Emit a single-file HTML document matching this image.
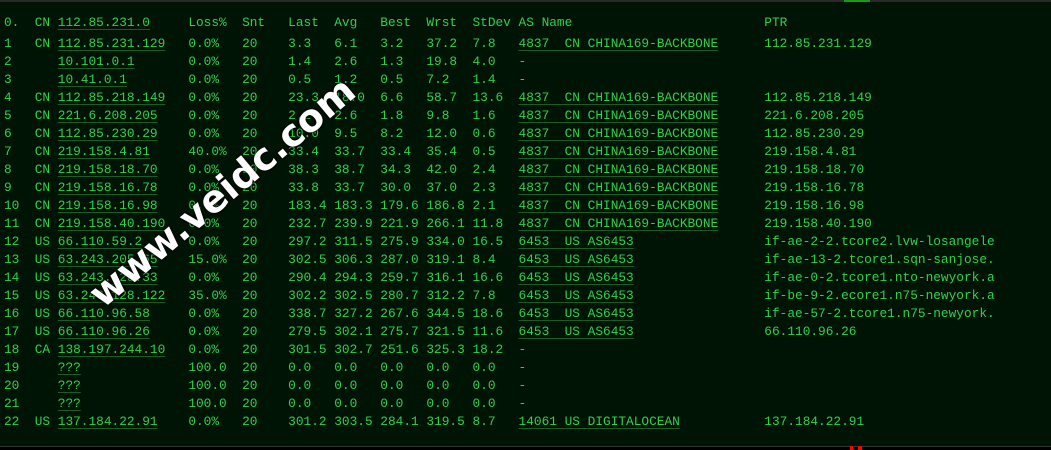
<!DOCTYPE html>
<html><head><meta charset="utf-8"><style>
html,body{margin:0;padding:0;background:#000;}
#t{position:absolute;left:0;top:0;width:1051px;height:447px;background:#001405;overflow:hidden;}
#bar{position:absolute;left:0;top:0;width:1051px;height:2px;background:#2a2a2a;}
#gb{position:absolute;left:844px;top:0;width:26px;height:2px;background:#1a9a1a;}
#bl{position:absolute;left:0;top:446px;width:1051px;height:1px;background:#333;}
.r{position:absolute;top:446px;width:3px;height:4px;background:#f00;}
pre{position:absolute;left:4px;top:14px;margin:0;font-family:"Liberation Mono",monospace;font-size:12.8px;line-height:18px;color:#2fd14a;}
pre .h{display:block;margin-bottom:3px;}
u{text-decoration:underline;text-decoration-color:#1c5a26;text-underline-offset:3px;}
#wm{position:absolute;left:222px;top:192px;transform:translate(-50%,-50%) rotate(-40deg);font-family:"DejaVu Sans","Liberation Sans",sans-serif;font-weight:bold;font-size:38px;color:#fff;letter-spacing:0px;white-space:nowrap;text-shadow:0 0 2px #000,0 0 3px #000;}
</style></head><body><div id="t"><div id="bar"></div><div id="gb"></div>
<pre><span class="h">0.  CN <u>112.85.231.0</u>     Loss%  Snt   Last  Avg   Best  Wrst  StDev AS Name                         PTR</span>1   CN <u>112.85.231.129</u>   0.0%   20    3.3   6.1   3.2   37.2  7.8   <u>4837  CN CHINA169-BACKBONE</u>      112.85.231.129
2      <u>10.101.0.1</u>       0.0%   20    1.4   2.6   1.3   19.8  4.0   -
3      <u>10.41.0.1</u>        0.0%   20    0.5   1.2   0.5   7.2   1.4   -
4   CN <u>112.85.218.149</u>   0.0%   20    23.3  18.0  6.6   58.7  13.6  <u>4837  CN CHINA169-BACKBONE</u>      112.85.218.149
5   CN <u>221.6.208.205</u>    0.0%   20    2.2   2.6   1.8   9.8   1.6   <u>4837  CN CHINA169-BACKBONE</u>      221.6.208.205
6   CN <u>112.85.230.29</u>    0.0%   20    10.0  9.5   8.2   12.0  0.6   <u>4837  CN CHINA169-BACKBONE</u>      112.85.230.29
7   CN <u>219.158.4.81</u>     40.0%  20    33.4  33.7  33.4  35.4  0.5   <u>4837  CN CHINA169-BACKBONE</u>      219.158.4.81
8   CN <u>219.158.18.70</u>    0.0%   20    38.3  38.7  34.3  42.0  2.4   <u>4837  CN CHINA169-BACKBONE</u>      219.158.18.70
9   CN <u>219.158.16.78</u>    0.0%   20    33.8  33.7  30.0  37.0  2.3   <u>4837  CN CHINA169-BACKBONE</u>      219.158.16.78
10  CN <u>219.158.16.98</u>    0.0%   20    183.4 183.3 179.6 186.8 2.1   <u>4837  CN CHINA169-BACKBONE</u>      219.158.16.98
11  CN <u>219.158.40.190</u>   0.0%   20    232.7 239.9 221.9 266.1 11.8  <u>4837  CN CHINA169-BACKBONE</u>      219.158.40.190
12  US <u>66.110.59.2</u>      0.0%   20    297.2 311.5 275.9 334.0 16.5  <u>6453  US AS6453</u>                 if-ae-2-2.tcore2.lvw-losangele
13  US <u>63.243.205.65</u>    15.0%  20    302.5 306.3 287.0 319.1 8.4   <u>6453  US AS6453</u>                 if-ae-13-2.tcore1.sqn-sanjose.
14  US <u>63.243.128.33</u>    0.0%   20    290.4 294.3 259.7 316.1 16.6  <u>6453  US AS6453</u>                 if-ae-0-2.tcore1.nto-newyork.a
15  US <u>63.243.128.122</u>   35.0%  20    302.2 302.5 280.7 312.2 7.8   <u>6453  US AS6453</u>                 if-be-9-2.ecore1.n75-newyork.a
16  US <u>66.110.96.58</u>     0.0%   20    338.7 327.2 267.6 344.5 18.6  <u>6453  US AS6453</u>                 if-ae-57-2.tcore1.n75-newyork.
17  US <u>66.110.96.26</u>     0.0%   20    279.5 302.1 275.7 321.5 11.6  <u>6453  US AS6453</u>                 66.110.96.26
18  CA <u>138.197.244.10</u>   0.0%   20    301.5 302.7 251.6 325.3 18.2  -
19     <u>???</u>              100.0  20    0.0   0.0   0.0   0.0   0.0   -
20     <u>???</u>              100.0  20    0.0   0.0   0.0   0.0   0.0   -
21     <u>???</u>              100.0  20    0.0   0.0   0.0   0.0   0.0   -
22  US <u>137.184.22.91</u>    0.0%   20    301.2 303.5 284.1 319.5 8.7   <u>14061 US DIGITALOCEAN</u>           137.184.22.91</pre>
<div id="wm">www.veidc.com</div>
<div id="bl"></div></div>
<div class="r" style="left:850px"></div><div class="r" style="left:858px;width:4px"></div>
</body></html>
